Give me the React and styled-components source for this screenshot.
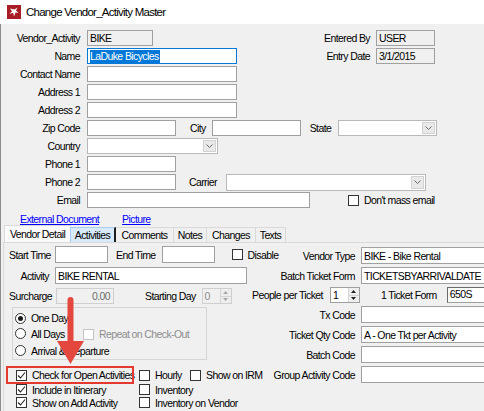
import React from 'react';
import styled, { createGlobalStyle } from 'styled-components';

const GlobalStyle = createGlobalStyle`
  html, body {
    margin: 0;
    padding: 0;
    background: #f0f0f0;
  }
  * {
    box-sizing: border-box;
  }
`;

const FONT = `"Liberation Sans", Arial, sans-serif`;

const Window = styled.div`
  position: relative;
  width: 484px;
  height: 411px;
  overflow: hidden;
  background: #f0f0f0;
  font-family: ${FONT};
  font-size: 10.5px;
  letter-spacing: -0.6px;
  color: #000;
  box-shadow: inset 1px 0 0 #8c8c8c;
`;

const TitleBar = styled.div`
  height: 24px;
  background: #fff;
  display: flex;
  align-items: center;
  gap: 5px;
  padding-left: 7px;
  font-size: 11.5px;
  letter-spacing: -0.75px;
`;

const TopForm = styled.div`
  display: flex;
  flex-direction: column;
  gap: 2px;
  padding: 6px 49px 0 0;
`;

const Row = styled.div`
  display: flex;
  align-items: center;
  height: ${p => p.$h || 16}px;
  white-space: nowrap;
`;

const Label = styled.span`
  flex: none;
  width: ${p => (p.$w ? `${p.$w}px` : 'auto')};
  text-align: right;
  margin-left: ${p => p.$ml || 0}px;
  margin-right: ${p => p.$gap ?? 7}px;
  white-space: nowrap;
`;

const Field = styled.div`
  flex: none;
  width: ${p => p.$w}px;
  height: ${p => p.$h || 16}px;
  display: flex;
  align-items: ${p => (p.$top ? 'flex-start' : 'center')};
  justify-content: ${p => (p.$right ? 'flex-end' : 'flex-start')};
  padding: 0 3px 0 2px;
  border: 1px solid
    ${p => (p.$focus ? '#0078d7' : p.$disabled ? '#cfcfcf' : '#a0a0a0')};
  border-top-color: ${p => (p.$sunken ? '#6a6a6a' : null)};
  border-left-color: ${p => (p.$sunken ? '#6a6a6a' : null)};
  background: ${p => (p.$readOnly || p.$disabled ? '#f0f0f0' : '#fff')};
  color: ${p => (p.$disabled ? '#6d6d6d' : '#000')};
  overflow: hidden;
  white-space: nowrap;
`;

const Selection = styled.span`
  background: #0078d7;
  color: #fff;
  line-height: 13px;
  padding: 0 1px 0 0;
`;

const RightGroup = styled.div`
  margin-left: auto;
  display: flex;
  align-items: center;
`;

const Combo = styled.div`
  flex: none;
  width: ${p => p.$w}px;
  height: ${p => p.$h || 16}px;
  display: flex;
  justify-content: flex-end;
  padding: 1px;
  border: 1px solid #b9b9b9;
  background: #fff;
`;

const DropButton = styled.div`
  width: 13px;
  height: 100%;
  display: flex;
  align-items: center;
  justify-content: center;
  background: #e9e9e9;
  border: 1px solid #d2d2d2;
`;

const Chevron = () => (
  <svg width="7" height="4" viewBox="0 0 7 4">
    <polyline points="0.5,0.5 3.5,3.5 6.5,0.5" fill="none" stroke="#6a6a6a" strokeWidth="1" />
  </svg>
);

const ComboBox = ({ w, h }) => (
  <Combo $w={w} $h={h}>
    <DropButton>
      <Chevron />
    </DropButton>
  </Combo>
);

const CheckItem = styled.span`
  display: inline-flex;
  align-items: center;
  gap: 5px;
  margin-left: ${p => p.$ml || 0}px;
  white-space: nowrap;
  color: ${p => (p.$disabled ? '#8d8d8d' : '#000')};
`;

const Box = styled.span`
  flex: none;
  width: 11px;
  height: 11px;
  display: inline-flex;
  align-items: center;
  justify-content: center;
  border: 1px solid ${p => (p.$disabled ? '#c4c4c4' : '#333')};
  border-radius: ${p => (p.$round ? '50%' : '0')};
  background: #fff;
`;

const Dot = styled.span`
  width: 5px;
  height: 5px;
  border-radius: 50%;
  background: #1a1a1a;
`;

const Check = ({ checked, disabled, ml, children }) => (
  <CheckItem $ml={ml} $disabled={disabled}>
    <Box $disabled={disabled}>
      {checked && (
        <svg width="9" height="9" viewBox="0 0 9 9">
          <polyline points="1,4.5 3.5,7 8,1.5" fill="none" stroke="#222" strokeWidth="1.1" />
        </svg>
      )}
    </Box>
    {children}
  </CheckItem>
);

const Radio = ({ checked, children }) => (
  <CheckItem>
    <Box $round>{checked && <Dot />}</Box>
    {children}
  </CheckItem>
);

const Spin = styled.div`
  flex: none;
  width: ${p => p.$w}px;
  height: 16px;
  display: flex;
  border: 1px solid ${p => (p.$disabled ? '#cfcfcf' : '#a0a0a0')};
  background: ${p => (p.$disabled ? '#f0f0f0' : '#fff')};
  color: ${p => (p.$disabled ? '#8d8d8d' : '#000')};
`;

const SpinValue = styled.span`
  flex: 1;
  display: flex;
  align-items: center;
  padding-left: 2px;
`;

const SpinButtons = styled.div`
  width: 11px;
  display: flex;
  flex-direction: column;
  border-left: 1px solid #d4d4d4;
`;

const SpinButton = styled.div`
  flex: 1;
  display: flex;
  align-items: center;
  justify-content: center;
  background: #eeeeee;
  & + & {
    border-top: 1px solid #d4d4d4;
  }
`;

const Spinner = ({ w, value, disabled }) => {
  const c = disabled ? '#a8a8a8' : '#222';
  return (
    <Spin $w={w} $disabled={disabled}>
      <SpinValue>{value}</SpinValue>
      <SpinButtons>
        <SpinButton>
          <svg width="5" height="3" viewBox="0 0 5 3">
            <polygon points="0,3 2.5,0 5,3" fill={c} />
          </svg>
        </SpinButton>
        <SpinButton>
          <svg width="5" height="3" viewBox="0 0 5 3">
            <polygon points="0,0 5,0 2.5,3" fill={c} />
          </svg>
        </SpinButton>
      </SpinButtons>
    </Spin>
  );
};

const LinkRow = styled.div`
  display: flex;
  gap: 23px;
  height: 12px;
  margin-top: 5px;
  padding-left: 20px;
  align-items: center;
`;

const Link = styled.a`
  color: #0000ff;
  text-decoration: underline;
  cursor: pointer;
`;

const TabStrip = styled.div`
  display: flex;
  align-items: flex-end;
  height: 17px;
  padding-left: 4px;
`;

const Tab = styled.div`
  flex: none;
  width: ${p => p.$w}px;
  height: ${p => (p.$selected ? 17 : 15)}px;
  margin-right: -1px;
  display: flex;
  align-items: center;
  justify-content: center;
  border: 1px solid ${p => (p.$hover ? '#a8cdee' : '#d9d9d9')};
  border-bottom: none;
  border-right: ${p => (p.$hover ? '2px solid #1e1e1e' : null)};
  background: ${p => (p.$selected ? '#fafafa' : p.$hover ? '#d8eaf9' : '#f0f0f0')};
  position: relative;
  z-index: ${p => (p.$hover ? 1 : 0)};
`;

const Panel = styled.div`
  display: flex;
  height: 169px;
  margin-left: 3px;
  padding: 0 0 0 5px;
  border-top: 1px solid #d9d9d9;
  border-left: 1px solid #d9d9d9;
`;

const LeftColumn = styled.div`
  flex: none;
  width: 241px;
  display: flex;
  flex-direction: column;
  gap: 4px;
  padding-top: 3px;
`;

const RightColumn = styled.div`
  flex: none;
  display: flex;
  flex-direction: column;
  gap: 3px;
  padding-top: 4px;
`;

const GroupBox = styled.div`
  width: 195px;
  height: 53px;
  margin: -1px 0 0 3px;
  padding: 2px 0 0 2px;
  border: 1px solid #d5d5d5;
  display: flex;
  flex-direction: column;
`;

const RadioRow = styled.div`
  display: flex;
  align-items: center;
  height: 17px;
`;

const RadioSlot = styled.div`
  flex: none;
  width: ${p => p.$w}px;
`;

const CheckGrid = styled.div`
  display: grid;
  grid-template-columns: 123px 51px auto;
  grid-template-rows: 16px 13px 13px;
  align-items: center;
  margin-top: 3px;
  padding-left: 7px;
`;

const Overlay = styled.svg`
  position: absolute;
  left: 0;
  top: 0;
  pointer-events: none;
`;

const AppIcon = () => (
  <svg width="14" height="14" viewBox="0 0 14 14">
    <rect width="14" height="14" fill="#a61e24" />
    <path
      d="M3 3.5 L7.5 4.5 L10.5 2.5 L9 5.5 L11.5 8 L8.5 7.5 L7 11.5 L6.2 7.8 L2.5 9 L5 6.2 Z"
      fill="#fff"
    />
  </svg>
);

const tabs = [
  { label: 'Vendor Detail', w: 67, selected: true },
  { label: 'Activities', w: 46, hover: true },
  { label: 'Comments', w: 59 },
  { label: 'Notes', w: 34 },
  { label: 'Changes', w: 50 },
  { label: 'Texts', w: 31 },
];

const rightFields = [
  { label: 'Vendor Type', value: 'BIKE - Bike Rental' },
  { label: 'Batch Ticket Form', value: 'TICKETSBYARRIVALDATE' },
  null,
  { label: 'Tx Code', value: '' },
  { label: 'Ticket Qty Code', value: 'A - One Tkt per Activity' },
  { label: 'Batch Code', value: '' },
  { label: 'Group Activity Code', value: '' },
];

export default function App() {
  return (
    <Window>
      <GlobalStyle />
      <TitleBar>
        <AppIcon />
        <span>Change Vendor_Activity Master</span>
      </TitleBar>

      <TopForm>
        <Row>
          <Label $w={80}>Vendor_Activity</Label>
          <Field $w={66} $readOnly>BIKE</Field>
          <RightGroup>
            <Label $w={60} $gap={6}>Entered By</Label>
            <Field $w={59} $readOnly>USER</Field>
          </RightGroup>
        </Row>
        <Row>
          <Label $w={80}>Name</Label>
          <Field $w={150} $focus>
            <Selection>LaDuke Bicycles</Selection>
          </Field>
          <RightGroup>
            <Label $w={60} $gap={6}>Entry Date</Label>
            <Field $w={59} $readOnly>3/1/2015</Field>
          </RightGroup>
        </Row>
        <Row>
          <Label $w={80}>Contact Name</Label>
          <Field $w={150} />
        </Row>
        <Row>
          <Label $w={80}>Address 1</Label>
          <Field $w={150} />
        </Row>
        <Row>
          <Label $w={80}>Address 2</Label>
          <Field $w={150} />
        </Row>
        <Row>
          <Label $w={80}>Zip Code</Label>
          <Field $w={89} />
          <Label $ml={14} $gap={6}>City</Label>
          <Field $w={89} />
          <Label $ml={9} $gap={7}>State</Label>
          <ComboBox w={99} />
        </Row>
        <Row>
          <Label $w={80}>Country</Label>
          <ComboBox w={131} />
        </Row>
        <Row>
          <Label $w={80}>Phone 1</Label>
          <Field $w={89} />
        </Row>
        <Row>
          <Label $w={80}>Phone 2</Label>
          <Field $w={89} />
          <Label $ml={13} $gap={9}>Carrier</Label>
          <ComboBox w={200} h={17} />
        </Row>
        <Row>
          <Label $w={80}>Email</Label>
          <Field $w={223} />
          <Check ml={38}>Don't mass email</Check>
        </Row>
      </TopForm>

      <LinkRow>
        <Link>External Document</Link>
        <Link>Picture</Link>
      </LinkRow>

      <TabStrip>
        {tabs.map(t => (
          <Tab key={t.label} $w={t.w} $selected={t.selected} $hover={t.hover}>
            {t.label}
          </Tab>
        ))}
      </TabStrip>

      <Panel>
        <LeftColumn>
          <Row $h={17}>
            <Label $w={40} $gap={6}>Start Time</Label>
            <Field $w={53} $h={17} />
            <Label $ml={8} $gap={6}>End Time</Label>
            <Field $w={53} $h={17} />
            <Check ml={17}>Disable</Check>
          </Row>
          <Row $h={17}>
            <Label $w={40} $gap={6}>Activity</Label>
            <Field $w={192} $h={17}>BIKE RENTAL</Field>
          </Row>
          <Row>
            <Label $w={40} $gap={7}>Surcharge</Label>
            <Field $w={58} $disabled $right>0.00</Field>
            <Label $ml={31} $gap={6}>Starting Day</Label>
            <Spinner w={30} value="0" disabled />
          </Row>
          <GroupBox>
            <RadioRow>
              <Radio checked>One Day</Radio>
            </RadioRow>
            <RadioRow>
              <RadioSlot $w={68}>
                <Radio>All Days</Radio>
              </RadioSlot>
              <Check disabled>Repeat on Check-Out</Check>
            </RadioRow>
            <RadioRow>
              <Radio>Arrival &amp; Departure</Radio>
            </RadioRow>
          </GroupBox>
          <CheckGrid>
            <Check checked>Check for Open Activities</Check>
            <Check>Hourly</Check>
            <Check>Show on IRM</Check>
            <Check checked>Include in Itinerary</Check>
            <Check>Inventory</Check>
            <span />
            <Check checked>Show on Add Activity</Check>
            <Check>Inventory on Vendor</Check>
            <span />
          </CheckGrid>
        </LeftColumn>

        <RightColumn>
          {rightFields.map((f, i) =>
            f ? (
              <Row key={i} $h={17}>
                <Label $w={105} $gap={6}>{f.label}</Label>
                <Field $w={130} $h={17}>{f.value}</Field>
              </Row>
            ) : (
              <Row key={i}>
                <Label $ml={2} $gap={7}>People per Ticket</Label>
                <Spinner w={30} value="1" />
                <Label $ml={21} $gap={10}>1 Ticket Form</Label>
                <Field $w={48} $sunken $top>650S</Field>
              </Row>
            )
          )}
        </RightColumn>
      </Panel>

      <Overlay width="484" height="411" viewBox="0 0 484 411">
        <rect x="7" y="367" width="126" height="16" fill="none" stroke="#e5392f" strokeWidth="2" />
        <line x1="70.5" y1="300" x2="70.5" y2="344" stroke="#e4473d" strokeWidth="6" strokeLinecap="round" />
        <polygon points="57,341 84,341 70.5,364" fill="#e4473d" />
      </Overlay>
    </Window>
  );
}
